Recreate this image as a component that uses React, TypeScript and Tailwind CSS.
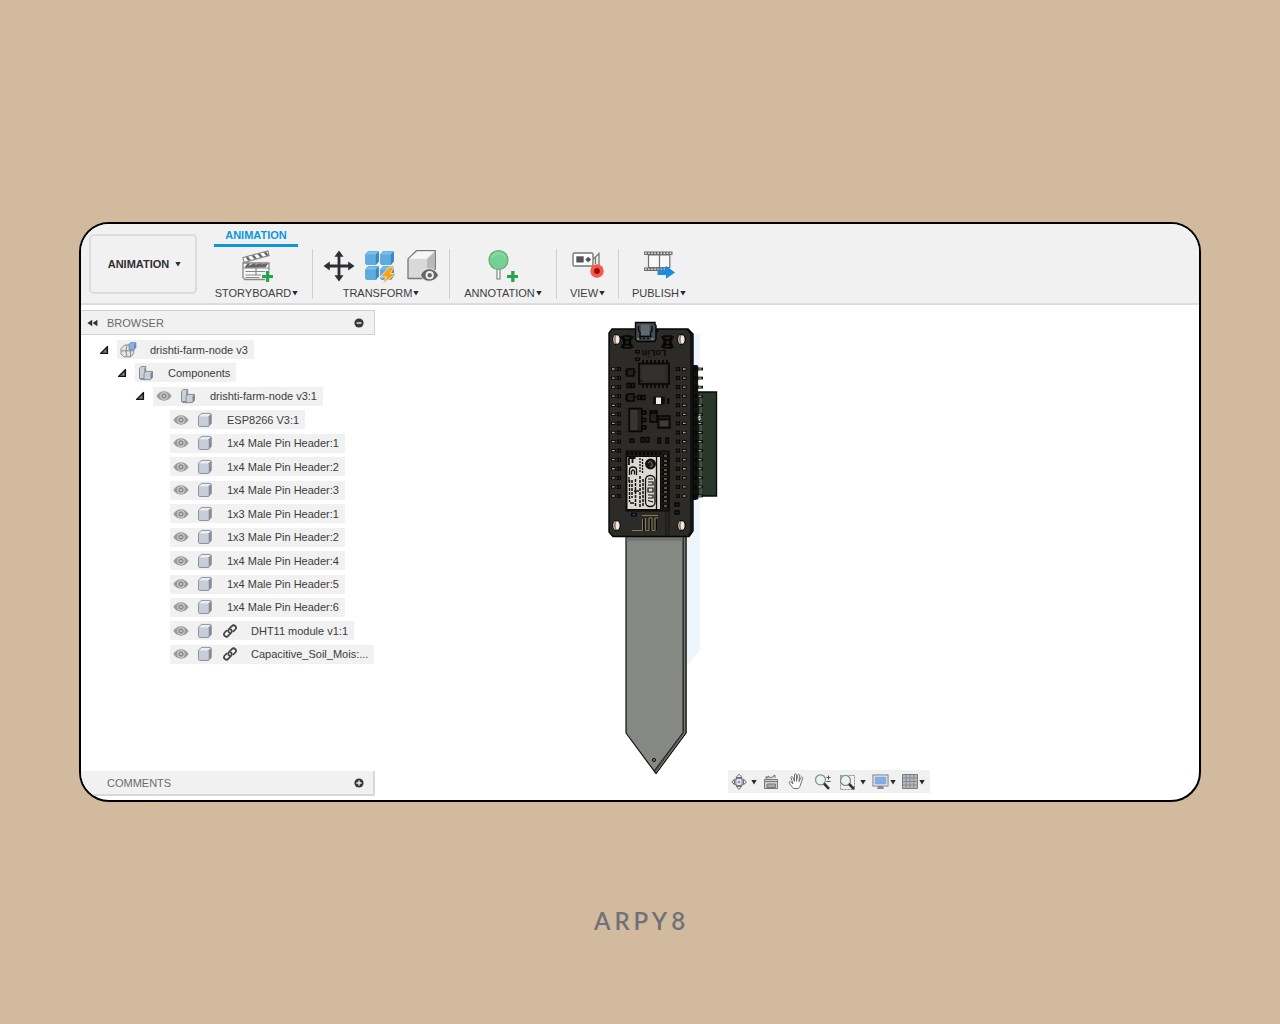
import React from "react";

type NodeKind = "document" | "group" | "body";

interface TreeNode {
  label: string;
  kind: NodeKind;
  level: 0 | 1 | 2 | 3;
  visibility?: boolean;
  linked?: boolean;
}

const NODES: TreeNode[] = [
  { label: "drishti-farm-node v3", kind: "document", level: 0 },
  { label: "Components", kind: "group", level: 1 },
  { label: "drishti-farm-node v3:1", kind: "group", level: 2, visibility: true },
  { label: "ESP8266 V3:1", kind: "body", level: 3, visibility: true },
  { label: "1x4 Male Pin Header:1", kind: "body", level: 3, visibility: true },
  { label: "1x4 Male Pin Header:2", kind: "body", level: 3, visibility: true },
  { label: "1x4 Male Pin Header:3", kind: "body", level: 3, visibility: true },
  { label: "1x3 Male Pin Header:1", kind: "body", level: 3, visibility: true },
  { label: "1x3 Male Pin Header:2", kind: "body", level: 3, visibility: true },
  { label: "1x4 Male Pin Header:4", kind: "body", level: 3, visibility: true },
  { label: "1x4 Male Pin Header:5", kind: "body", level: 3, visibility: true },
  { label: "1x4 Male Pin Header:6", kind: "body", level: 3, visibility: true },
  { label: "DHT11 module v1:1", kind: "body", level: 3, visibility: true, linked: true },
  { label: "Capacitive_Soil_Mois:...", kind: "body", level: 3, visibility: true, linked: true },
];

const INDENT = ["pl-[18px]", "pl-[36px]", "pl-[54px]", "pl-[89px]"];

function Caret({ className = "" }: { className?: string }) {
  return (
    <svg width="6" height="6" viewBox="0 0 6 6" className={`shrink-0 ${className}`} aria-hidden="true">
      <path d="M0.3 1h5.4L3 5.4z" fill="#2b2b2b" />
    </svg>
  );
}

function EyeIcon() {
  return (
    <svg width="16" height="12" viewBox="0 0 16 12" className="shrink-0" aria-hidden="true">
      <path d="M0.4 6C3.6-0.4 12.4-0.4 15.6 6 12.4 12.2 3.6 12.2 0.4 6z" fill="#9b9b9b" />
      <circle cx="8" cy="6" r="3.7" fill="#d6d6d6" />
      <circle cx="8" cy="6" r="2.7" fill="#8c8c8c" />
      <circle cx="8" cy="6" r="1.1" fill="#d0d0d0" />
    </svg>
  );
}

function BodyIcon() {
  return (
    <svg width="16" height="16" viewBox="0 0 16 16" className="shrink-0" aria-hidden="true">
      <path d="M1.5 4.2L4.3 1.4h9.2l.8.8v9.2l-2.7 3.1H2.3l-.8-.8z" fill="#c3c8d2" stroke="#8f949d" strokeLinejoin="round" />
      <path d="M2 4.5L4.6 2h9.2l-2.5 2.5z" fill="#eceef2" />
      <path d="M11.5 4.5L14 2v9.2l-2.5 2.7z" fill="#858b95" />
      <path d="M2.5 5h9v8.500h-9z" fill="#c9cdd7" />
    </svg>
  );
}

function GroupIcon() {
  return (
    <svg width="16" height="16" viewBox="0 0 16 16" className="shrink-0" aria-hidden="true">
      <path d="M1.5 3.2L3.300 1.500h4.400v12H1.500z" fill="#ccd1d9" stroke="#868b93" />
      <path d="M6.200 3.300L7.700 1.800v11.500H6.200z" fill="#8b9098" />
      <path d="M6 8.200L8 6.400h6.500v6l-2 2.200H6z" fill="#c9ced8" stroke="#868b93" />
      <path d="M12.500 8.200l1.600-1.400v5.400l-1.600 1.900z" fill="#80858d" />
      <path d="M1.500 13.200L3 14.600h4" fill="none" stroke="#868b93" />
    </svg>
  );
}

function DocumentIcon() {
  return (
    <svg width="17" height="16" viewBox="0 0 17 16" className="-mr-px shrink-0" aria-hidden="true">
      <path d="M1 6.5L4.5 3h7.3l2 3.5v4.7L11 14.8H4L1 12z" fill="#e3e5e8" stroke="#85898e" />
      <path d="M1.3 8.8h12M7 3.4C5.8 6 5.8 12 7 14.6M10.6 4v10.2" fill="none" stroke="#85898e" />
      <path d="M9 2.2L10.5 0.6h5.4v5l-1.7 2H9z" fill="#8eb0df" stroke="#5d7fae" strokeWidth="0.7" />
      <path d="M14 2.4L15.7 0.8v4.8L14 7.3z" fill="#6688bb" />
    </svg>
  );
}

function LinkIcon() {
  return (
    <svg width="16" height="16" viewBox="0 0 16 16" className="-ml-[5px] -mr-px shrink-0" fill="none" stroke="#414141" strokeWidth="1.7" aria-hidden="true">
      <path d="M7.2 9.5C5.5 8.2 6.3 6.7 7.2 5.8L9.8 3.2c1-1 2.6-1 3.5-.1.9.9.9 2.4 0 3.4L11.4 8.4" strokeLinecap="round" />
      <path d="M8.8 6.5c1.7 1.3.9 2.8 0 3.7l-2.6 2.6c-1 1-2.6 1-3.5.1-.9-.9-.9-2.4 0-3.4L4.6 7.6" strokeLinecap="round" />
    </svg>
  );
}

function Disclosure() {
  return (
    <svg width="10" height="10" viewBox="0 0 10 10" aria-hidden="true">
      <path d="M8.5 1.500v7H1.500z" fill="#555" stroke="#161616" strokeWidth="1.2" strokeLinejoin="round" />
      <path d="M7 4.500v2.700H4.300z" fill="#888" />
    </svg>
  );
}

function TreeRow({ node }: { node: TreeNode }) {
  return (
    <li className={`flex h-[19px] items-center ${INDENT[node.level]}`}>
      {node.level < 3 ? (
        <button type="button" aria-label={`Collapse ${node.label}`} className="mr-[8px] w-[10px] shrink-0">
          <Disclosure />
        </button>
      ) : null}
      <span className="flex h-full items-center gap-2 bg-[#f1f1f1] pl-[3px] pr-[6px]">
        {node.visibility ? (
          <button type="button" aria-label={`Toggle visibility of ${node.label}`}>
            <EyeIcon />
          </button>
        ) : null}
        <span className="flex items-center gap-[14px]">
          {node.kind === "document" ? <DocumentIcon /> : node.kind === "group" ? <GroupIcon /> : <BodyIcon />}
          {node.linked ? <LinkIcon /> : null}
          <span className="whitespace-nowrap">{node.label}</span>
        </span>
      </span>
    </li>
  );
}

function StoryboardIcon() {
  const slots = [0, 1, 2, 3];
  return (
    <svg width="32" height="34" viewBox="0 0 32 34" aria-hidden="true">
      <path d="M2 8.500L27 2l1 4.500L3 13.500z" fill="#fff" stroke="#888" strokeWidth="1.2" />
      {slots.map((i) => (
        <path key={i} d={`M${4.500 + i * 6} ${8.400 - i * 1.600}l2.600-.700 2.800 3.300-2.600.700z`} fill="#666" />
      ))}
      <path d="M2 14h26v15.500l-1 1H4l-2-2z" fill="#f8f8f8" stroke="#888" strokeWidth="1.3" />
      {slots.map((i) => (
        <path key={i} d={`M${6.500 + i * 6} 14.500h2.800l-3 4H3.500z`} fill="#666" />
      ))}
      <path d="M2 19h26M4.500 22.500h21M15 19v3.500M4.500 26h16M15 22.500V26M4.500 28.500h14" stroke="#888" strokeWidth="1.2" fill="none" />
      <path d="M24.2 21.5h4.600v4h4v3.600h-4v4h-4.600v-4h-4.200v-3.600h4.200z" fill="#f1f1f1" />
      <path d="M25 22h3.200v4H32v3h-3.800v4H25v-4h-4v-3h4z" fill="#1fa84d" />
    </svg>
  );
}

function MoveIcon() {
  return (
    <svg width="32" height="32" viewBox="0 0 32 32" aria-hidden="true">
      <path
        d="M16 0.5l4.6 6.3h-3.2v7.8h7.8v-3.2l6.3 4.6-6.3 4.6v-3.2h-7.8v7.8h3.2L16 31.5l-4.6-6.3h3.2v-7.8H6.8v3.2L0.5 16l6.3-4.6v3.2h7.8V6.8h-3.2z"
        fill="#2e2f30"
      />
    </svg>
  );
}

function CubesIcon() {
  const places = [
    [1, 1],
    [16, 1],
    [1, 16],
    [16, 16],
  ];
  return (
    <svg width="33" height="33" viewBox="0 0 33 33" aria-hidden="true">
      {places.map(([x, y]) => (
        <g key={`${x}-${y}`} transform={`translate(${x} ${y})`}>
          <path d="M0 3.6L3.2 0h10l.8.8v9.4L10.800 14H1.600L0 12.600z" fill="#5fabdf" />
          <path d="M1 3.600L3.600.800h9.400l-2.600 2.800z" fill="#7cbfe9" />
          <path d="M10.800 3.600L13.800.700v9.500L10.800 14z" fill="#3a86bd" />
        </g>
      ))}
      <path d="M25.500 17L16 27h6.500L18 34l15-10.500h-6.700l4.200-6.500z" fill="#f9a20c" stroke="#f1f1f1" strokeWidth="0.800" />
    </svg>
  );
}

function CubeEyeIcon() {
  return (
    <svg width="34" height="34" viewBox="0 0 34 34" aria-hidden="true">
      <path d="M2 10L10.5 1.7h18.8v18l-9 9.8H2z" fill="#d9d9d9" stroke="#777" strokeWidth="1.3" strokeLinejoin="round" />
      <path d="M3 9.800L11 2.400h17.300l-7.700 7.400z" fill="#f6f6f6" />
      <path d="M21 10.200L28.600 3v16.500L21 28z" fill="#b9b9b9" />
      <path d="M14.500 26.200c3.200-8.600 14-8.600 18 0-4 8-14.800 8-18 0z" fill="#666" stroke="#f1f1f1" />
      <circle cx="23.700" cy="26.200" r="4.100" fill="#f1f1f1" />
      <circle cx="23.700" cy="26.200" r="2.200" fill="#666" />
    </svg>
  );
}

function AnnotationIcon() {
  return (
    <svg width="32" height="34" viewBox="0 0 32 34" aria-hidden="true">
      <path d="M10 20h3v10h-3z" fill="#fff" stroke="#777" strokeWidth="1.1" />
      <circle cx="11.500" cy="11" r="9.500" fill="#75d193" stroke="#62ad78" strokeWidth="1.200" />
      <path d="M5 9a6.800 6.800 0 0113 0" fill="none" stroke="#86daa0" strokeWidth="2" />
      <path d="M24.200 22h3.300v4H31v3h-3.500v4h-3.300v-4H20v-3h4.200z" fill="#22a64f" />
    </svg>
  );
}

function CameraIcon() {
  return (
    <svg width="34" height="34" viewBox="0 0 34 34" aria-hidden="true">
      <rect x="2" y="4" width="20" height="13" rx="1.600" fill="#fff" stroke="#777" strokeWidth="1.400" />
      <rect x="5.300" y="7.300" width="7.400" height="6.200" fill="#555" />
      <path d="M17.200 7.700l3 2.900-3 2.900-3-2.900z" fill="#555" />
      <path d="M22.500 10l5.500-5.500V17M24.500 8.500V15" fill="none" stroke="#777" strokeWidth="1.300" />
      <circle cx="26" cy="22" r="6.700" fill="#fb5547" />
      <circle cx="26" cy="22" r="2.900" fill="#8e120d" />
    </svg>
  );
}

function PublishIcon() {
  const holes = [0, 1, 2, 3, 4, 5, 6, 7, 8];
  return (
    <svg width="32" height="34" viewBox="0 0 32 34" aria-hidden="true">
      <path d="M1 2.500h28.500v3.500H1zM1 18.500h22V22H1z" fill="#6c6c6c" />
      {holes.map((i) => (
        <path key={i} d={`M${2 + i * 3.100} 3.500h1.500v1.600h-1.500zM${2 + i * 3.100} 19.500h1.500v1.400h-1.500z`} fill="#e8e8e8" />
      ))}
      <path d="M5.500 6h11v12.500h-11zM16.500 6h10.300v12.500H16.500z" fill="#f8f8f8" stroke="#707070" strokeWidth="1.200" />
      <path d="M14.500 20.500H23v-3.800l9 6.800-9 6.200v-3.800h-8.500z" fill="#1d8ce0" />
    </svg>
  );
}

interface ToolGroupProps {
  label: string;
  width: string;
  icons: { name: string; icon: React.ReactNode }[];
  last?: boolean;
}

function ToolGroup({ label, width, icons, last }: ToolGroupProps) {
  return (
    <div className={`flex h-[50px] shrink-0 flex-col items-center border-r ${last ? "border-transparent" : "border-[#cfcfcf]"} ${width}`}>
      <div className="flex h-[34px] items-center gap-[9px]">
        {icons.map((entry) => (
          <button key={entry.name} type="button" aria-label={entry.name}>
            {entry.icon}
          </button>
        ))}
      </div>
      <button type="button" className="mt-[3px] flex items-center gap-px whitespace-nowrap leading-[14px] text-[#3d3d3d]">
        {label}
        <Caret />
      </button>
    </div>
  );
}

function Ribbon() {
  return (
    <header className="flex h-[81px] shrink-0 items-start border-b-2 border-[#dcdcdc] bg-[#f1f1f1]">
      <button
        type="button"
        className="ml-[8px] mt-[10px] flex h-[60px] w-[108px] shrink-0 items-center justify-center gap-[6px] rounded-[5px] border-2 border-[#dcdcdc] pb-px pl-[3px] font-bold text-[#2f2f2f]"
      >
        ANIMATION
        <Caret />
      </button>
      <div className="ml-[4px] flex flex-col">
        <div role="tablist" className="ml-[13px] flex">
          <button type="button" role="tab" aria-selected="true" className="flex h-[23px] w-[84px] items-center justify-center border-b-3 border-[#0d97dc] pt-[2px] font-bold text-[#0d97dc]">
            ANIMATION
          </button>
        </div>
        <div className="mt-[2px] flex">
          <ToolGroup label="STORYBOARD" width="w-[112px]" icons={[{ name: "New storyboard", icon: <StoryboardIcon /> }]} />
          <ToolGroup
            label="TRANSFORM"
            width="w-[137px]"
            icons={[
              { name: "Transform components", icon: <MoveIcon /> },
              { name: "Auto explode", icon: <CubesIcon /> },
              { name: "Show or hide", icon: <CubeEyeIcon /> },
            ]}
          />
          <ToolGroup label="ANNOTATION" width="w-[107px]" icons={[{ name: "Create callout", icon: <AnnotationIcon /> }]} />
          <ToolGroup label="VIEW" width="w-[62px]" icons={[{ name: "Record view", icon: <CameraIcon /> }]} />
          <ToolGroup label="PUBLISH" width="w-[81px]" last icons={[{ name: "Publish video", icon: <PublishIcon /> }]} />
        </div>
      </div>
    </header>
  );
}

function RoundButton({ sign, label }: { sign: "minus" | "plus"; label: string }) {
  return (
    <button type="button" aria-label={label}>
      <svg width="10" height="10" viewBox="0 0 10 10" aria-hidden="true">
        <circle cx="5" cy="5" r="4.6" fill="#393939" />
        <path d={sign === "minus" ? "M2.6 5h4.8" : "M2.4 5h5.2M5 2.4v5.2"} stroke="#f1f1f1" strokeWidth="1.4" />
      </svg>
    </button>
  );
}

function BrowserPanel() {
  return (
    <aside className="flex w-[294px] shrink-0 flex-col pt-[5px]">
      <div className="flex h-[25px] items-center border border-l-0 border-[#cfcfcf] bg-[#f1f1f1] pl-[6px] pr-[10px] text-[#6a6a6a]">
        <button type="button" aria-label="Collapse browser" className="mr-[9px]">
          <svg width="11" height="8" viewBox="0 0 11 8" aria-hidden="true">
            <path d="M5.2 0.8v6.4L0.4 4zM10.4 0.8v6.4L5.6 4z" fill="#333" />
          </svg>
        </button>
        <h2 className="flex-1">BROWSER</h2>
        <RoundButton sign="minus" label="Close browser" />
      </div>
      <ul className="mt-[5px] flex h-[324px] flex-col justify-between text-[#3c3c3c]">
        {NODES.map((node) => (
          <TreeRow key={node.label} node={node} />
        ))}
      </ul>
      <div className="mb-[4px] mt-auto flex h-[25px] items-center border-b-2 border-r-2 border-[#d8d8d8] bg-[#f1f1f1] pl-[26px] pr-[9px] text-[#6a6a6a]">
        <h2 className="flex-1">COMMENTS</h2>
        <RoundButton sign="plus" label="Open comments" />
      </div>
    </aside>
  );
}

const PIN_ROWS = Array.from({ length: 15 }, (_, i) => 369 + i * 9.07);

function MountingHole({ x, y }: { x: number; y: number }) {
  return (
    <g>
      <ellipse cx={x} cy={y} rx="3.8" ry="5.2" fill="#8c7b6c" stroke="#000" />
      <ellipse cx={x + 1} cy={y} rx="1.8" ry="4" fill="#efece6" />
      <path d={`M${x - 2} ${y - 4}q-2 4 0 8`} stroke="#c8b9a8" fill="none" />
    </g>
  );
}

function TactSwitch({ x, y }: { x: number; y: number }) {
  return (
    <g fill="none" stroke="#050505" strokeWidth="1.4">
      <path d={`M${x + 1} ${y}h7v12h-7z`} fill="#24221f" />
      <path d={`M${x + 2.5} ${y + 4}h4.500v4.500h-4.500zM${x - 1} ${y + 3}h3v6h-3M${x + 10} ${y + 3}h-3v6h3`} />
      <path d={`M${x - 2} ${y + 1}h3M${x - 2} ${y + 11}h3M${x + 8} ${y + 1}h3M${x + 8} ${y + 11}h3`} />
    </g>
  );
}

function SensorModel() {
  return (
    <svg width="112" height="456" viewBox="607 320 112 456" role="img" aria-label="Sensor node model" className="shrink-0">
      <path d="M692 334h8v316l-13 16V536h5z" fill="#eef6fc" />

      <path d="M626 536h60v197l-30 40.5L626 733z" fill="#868983" stroke="#111" strokeWidth="1.2" strokeLinejoin="round" />
      <path d="M683 536h3v197l-30 40.5-2-2.500 29-38.500z" fill="#4e4f4c" stroke="#111" strokeWidth="0.900" />
      <path d="M684.700 536v197l-28.500 38.800" fill="none" stroke="#90918d" strokeWidth="0.700" />
      <path d="M626.500 537h56v4h-56z" fill="#747771" />
      <circle cx="654" cy="760" r="1.600" fill="#6e716c" stroke="#111" strokeWidth="1" />

      <path d="M698 392h18.500v104H698z" fill="#2a372d" stroke="#0b0d0b" strokeWidth="1.400" />
      <path d="M699.500 394h2.500v100h-2.500z" fill="#3d544b" />
      <path d="M692 365h5l1 3v129l-2 3h-4z" fill="#0e0d0d" />
      {PIN_ROWS.map((y) => (
        <g key={y}>
          <path d={`M693 ${y - 3.200}h5v6.400H693z`} fill="#0b0b0b" stroke="#282828" strokeWidth="0.500" />
          <path d={`M697 ${y}h6`} stroke="#090909" strokeWidth="2.800" />
          <path d={`M698.500 ${y}h3`} stroke="#b3a978" strokeWidth="1.200" />
        </g>
      ))}
      <ellipse cx="699.500" cy="418" rx="1.800" ry="3" fill="#d9dddb" stroke="#151515" />
      <path d="M698.500 419l2-2" stroke="#444" />

      <path d="M612 329h76l5 5v197l-4 5.500h-76l-4-4.500V333z" fill="#2c2b28" stroke="#050505" strokeWidth="1.400" />
      <path d="M687.500 330l3.500 4v198l-2.500 3" fill="none" stroke="#0b0b0b" strokeWidth="1.400" />
      <path d="M669 451v84M666 512v24" stroke="#141312" />

      <path d="M635.500 322.500h19.500v2l1 1v14l-1.500 2h-17l-2-2z" fill="#454b51" stroke="#050505" strokeWidth="1.400" />
      <path d="M638.500 326v4.500l1.500 2v4M652 326v4.500l-1.500 2v4" fill="none" stroke="#090909" strokeWidth="1.400" />
      <path d="M641 324.500h8.500v11H641z" fill="#606870" />
      <path d="M639 336.500h12.500M639.500 338.500h2M643 338.500h2M647 338.500h2" stroke="#0a0a0a" strokeWidth="1.500" />
      <circle cx="657" cy="331" r="1.400" fill="#080808" />
      <path d="M637 339h2M651.500 339h2" stroke="#b7bcc0" />

      <MountingHole x={616.500} y={339.500} />
      <MountingHole x={681.500} y={339.500} />
      <MountingHole x={616.500} y={525.500} />
      <MountingHole x={681.500} y={525.500} />
      <TactSwitch x={622.500} y={336} />
      <TactSwitch x={663} y={336} />

      <text x="654" y="350" transform="rotate(180 654 350)" textAnchor="middle" fontSize="9" fontFamily="Liberation Sans, sans-serif" fill="#0b0a09" fontWeight="700">
        LoLin
      </text>
      <path d="M635 350h5v3.500h-5zM635 357.500h5v3.500h-5z" fill="#0a0909" />
      <path d="M636.500 351.700h2M636.500 359.200h2" stroke="#7d211b" />

      {PIN_ROWS.map((y) => (
        <g key={y} stroke="#080706" fill="none">
          <path d={`M611 ${y}h4.500`} strokeWidth="3.200" />
          <path d={`M616.500 ${y - 1.400}h4.500M616.500 ${y + 1.400}h4.500M618 ${y - 2}v4M620.500 ${y - 2}v4`} strokeWidth="1" />
          <path d={`M682 ${y}h4.500`} strokeWidth="3.200" />
          <path d={`M675.500 ${y - 1.400}h4.500M675.500 ${y + 1.400}h4.500M677 ${y - 2}v4M679.500 ${y - 2}v4`} strokeWidth="1" />
          <path d={`M612 ${y}h2.600M683 ${y}h2.600`} stroke="#b3a56c" strokeWidth="1.300" />
        </g>
      ))}

      {[643, 647, 651, 655, 659, 663, 667].map((x) => (
        <path key={x} d={`M${x} 360v4M${x} 384v4`} stroke="#060606" strokeWidth="1.600" />
      ))}
      <path d="M639 363.500h30v20.500h-30z" fill="#2b2a28" stroke="#060606" strokeWidth="1.600" />
      <path d="M641.500 366h23.500v15.500h-23.500z" fill="#33312f" />
      <circle cx="641.500" cy="381" r="0.900" fill="#0a0a0a" />

      <g fill="#24221f" stroke="#060606" strokeWidth="1.300">
        <path d="M627 369h7v7h-7zM627 394h7v7h-7z" />
        <path d="M625 371h2M625 374h2M634 372h2M625 396h2M625 399h2M634 397h2" />
        <path d="M627 383.500h3v4h-3zM631.500 383.500h3v4h-3zM637.500 395.500h3v4h-3zM642 395.500h3v4h-3z" />
        <path d="M629 408.500h13v23h-13z" />
        <path d="M642 411h4v3h-4zM642 418.500h4v3h-4zM642 426h4v3h-4z" />
        <path d="M650 411h7v11h-7zM658 416h12v12h-12z" />
        <path d="M650 413h7M658 419h12" />
        <path d="M641 437.500h3v4.500h-3zM646 437.500h3v4.500h-3zM658 438h2.500v5h-2.500zM666 438h2.500v5h-2.500zM630 439h4v3h-4z" />
        <path d="M675 503h4v3h-4zM675 511h4v3h-4z" />
      </g>
      <path d="M630.500 410h7v20h-7z" fill="#383633" />
      <path d="M660 421h8v5h-8z" fill="#403e3c" />
      <path d="M653 396.500h12v8h-12z" fill="#11100f" />
      <path d="M656 397.500h5v6.500h-5z" fill="#eef0e1" />
      <path d="M667 398h2.500v6H667z" fill="#0a0a0a" />

      <path d="M626 451h43v60h-43z" fill="#1b1a18" stroke="#060606" />
      {[628, 632, 636, 640, 644, 648, 652, 656, 660].map((x) => (
        <path key={x} d={`M${x} 452v3`} stroke="#060606" strokeWidth="1.800" />
      ))}
      <path d="M627 456.500h33.500v53H627z" fill="#dcd9d3" stroke="#0a0908" />
      <path d="M656.500 456v54" stroke="#0a0908" strokeWidth="1.300" />
      <g fill="none" stroke="#100d0b" strokeWidth="1.300">
        <path d="M629 458v7M628.500 458h7M632.500 458v5" strokeWidth="1.800" />
        <path d="M629.500 475v-5q0-3 3.500-3t3.500 3v5M631.500 474.500v-3q1.500-3 3 0v3" />
        <path d="M640 458v15M642.500 459v14" strokeDasharray="2 1" />
        <circle cx="650.500" cy="464" r="4.800" fill="#191714" />
        <path d="M648 463q3-3 4 1t-2 2" stroke="#99948b" strokeWidth="0.800" />
        <rect x="645.500" y="475.500" width="9.500" height="31" rx="4.500" />
        <path d="M648 479h5M648 482h5v3h-5M648 488h5v4h-5zM648 495h5v3h-5M648 500.500l5 1.500" strokeWidth="1.200" />
        <path d="M629.500 480v22M632 480v18M635.500 479v27M640 476v32M643 479v28" strokeWidth="1.500" strokeDasharray="3 1" />
        <path d="M629 477v5M634 491h5M630 503h4" />
      </g>
      {[456, 461, 465, 470, 474, 479, 483, 488, 492, 497, 501, 506].map((y) => (
        <g key={y}>
          <path d={`M662.500 ${y}h6`} stroke="#050505" strokeWidth="2.800" />
          <path d={`M664 ${y}h3`} stroke="#b0a572" />
        </g>
      ))}
      <path d="M631 512.500h6v4h-6z" fill="#080807" />
      <path d="M632.500 514.500h3" stroke="#2932b9" strokeWidth="1.500" />
      <path d="M643.500 519v11h4M650.500 518v12h3M656.500 518v12" stroke="#050505" fill="none" />
      <path d="M642 515.500h16M632 530.500h10.500V519M645.500 518v12.500h3.500V518h3v12.500h3V518h3" fill="none" stroke="#857c55" />
    </svg>
  );
}

function NavigationBar() {
  return (
    <nav aria-label="View navigation" className="flex h-[23px] w-[202px] shrink-0 items-center bg-[#f1f1f1] pl-[3px]">
      <button type="button" aria-label="Orbit" className="mr-[6px] flex items-center gap-[2px]">
        <svg width="18" height="18" viewBox="0 0 18 18" fill="none" stroke="#717171" aria-hidden="true">
          <ellipse cx="8" cy="9" rx="6.500" ry="3.500" />
          <ellipse cx="8" cy="9" rx="3.200" ry="6" />
          <path d="M5 4.500L8 1.200l3 3.300zM5.500 13.500L8 16.500l2.500-3zM3.500 6.500L.800 9l2.700 2.500zM12.500 6.500L15.500 9l-3 2.500z" fill="#f7f7f7" />
          <path d="M8 7.500v3M6.500 9h3" stroke="#3a8ed0" />
        </svg>
        <Caret />
      </button>
      <button type="button" aria-label="Look at" className="mr-[9px]">
        <svg width="16" height="16" viewBox="0 0 16 16" aria-hidden="true">
          <path d="M3 5V2.500l2 1.300V2l3 1.800L12 1v3M1.500 5.500h13v9h-13z" fill="#d1d1d1" stroke="#767676" />
          <path d="M2 7.500h12M4 10h8.500v3.500H4z" fill="#aaa" stroke="#777" />
        </svg>
      </button>
      <button type="button" aria-label="Pan" className="mr-[9px]">
        <svg width="17" height="17" viewBox="0 0 17 17" aria-hidden="true">
          <path d="M5.500 15.500L1.200 10.200C.500 9 2 8.300 3 9.200l2 1.700-2-6C2.600 3.500 4.300 3 4.900 4.500l1.600 4V2c0-1.500 2-1.500 2 0v6.300l1.300-6c.400-1.300 2.200-1 2 .400l-.900 6 2-4c.700-1.200 2.200-.500 1.800.700l-2.800 8-1.500 2.100z" fill="#fcfcfc" stroke="#717171" />
        </svg>
      </button>
      <button type="button" aria-label="Zoom" className="mr-[7px]">
        <svg width="18" height="18" viewBox="0 0 18 18" aria-hidden="true">
          <circle cx="6.500" cy="6.800" r="5" fill="#e9f2f5" stroke="#8b8b8b" strokeWidth="1.200" />
          <path d="M10 10.500l5 5.300" stroke="#343434" strokeWidth="2.600" />
          <path d="M12.500 4.500h4M14.500 2.500v4M12.500 8.500h4" stroke="#555" />
        </svg>
      </button>
      <button type="button" aria-label="Fit" className="mr-[6px] flex items-center gap-[3px]">
        <svg width="18" height="18" viewBox="0 0 18 18" aria-hidden="true">
          <path d="M1.500 2.500h14v14h-14z" fill="none" stroke="#8a8a8a" strokeDasharray="2 1" />
          <circle cx="6.500" cy="7.500" r="5" fill="#eaf2f4" stroke="#858585" strokeWidth="1.200" />
          <path d="M10 11l5 5" stroke="#343434" strokeWidth="2.600" />
        </svg>
        <Caret />
      </button>
      <button type="button" aria-label="Display settings" className="mr-[6px] flex items-center gap-px">
        <svg width="17" height="16" viewBox="0 0 17 16" aria-hidden="true">
          <rect x="1" y="1" width="15" height="11" fill="#fff" stroke="#777" />
          <path d="M2.500 2.500h12v8h-12z" fill="#85aee0" />
          <path d="M6 12h5l1 3H5z" fill="#8a8a8a" />
        </svg>
        <Caret />
      </button>
      <button type="button" aria-label="Grid settings" className="flex items-center gap-px">
        <svg width="16" height="16" viewBox="0 0 16 16" aria-hidden="true">
          <path d="M.500.500h15v14H.500z" fill="#b7bbc0" stroke="#7c7c7c" />
          <path d="M4.200 1v13M8 1v13M11.800 1v13M1 4h14M1 7.500h14M1 11h14" stroke="#858a90" />
        </svg>
        <Caret />
      </button>
    </nav>
  );
}

export default function App() {
  return (
    <div className="flex min-h-screen flex-col bg-[#d1ba9d] px-[79px] pt-[222px] font-['Liberation_Sans',Arial,sans-serif] text-[11px] leading-[14px]">
      <div className="flex min-h-[580px] flex-col overflow-hidden rounded-[30px] border-2 border-black bg-white">
        <Ribbon />
        <div className="flex flex-1">
          <BrowserPanel />
          <main className="flex flex-1 items-start pl-[232px] pt-[15px]">
            <SensorModel />
            <div className="ml-[9px] mt-[450px]">
              <NavigationBar />
            </div>
          </main>
        </div>
      </div>
      <footer className="mt-[103px] pl-[3px] text-center font-['Lato',sans-serif] text-2xl font-semibold tracking-[4px] text-[#6f7078]">ARPY8</footer>
    </div>
  );
}
